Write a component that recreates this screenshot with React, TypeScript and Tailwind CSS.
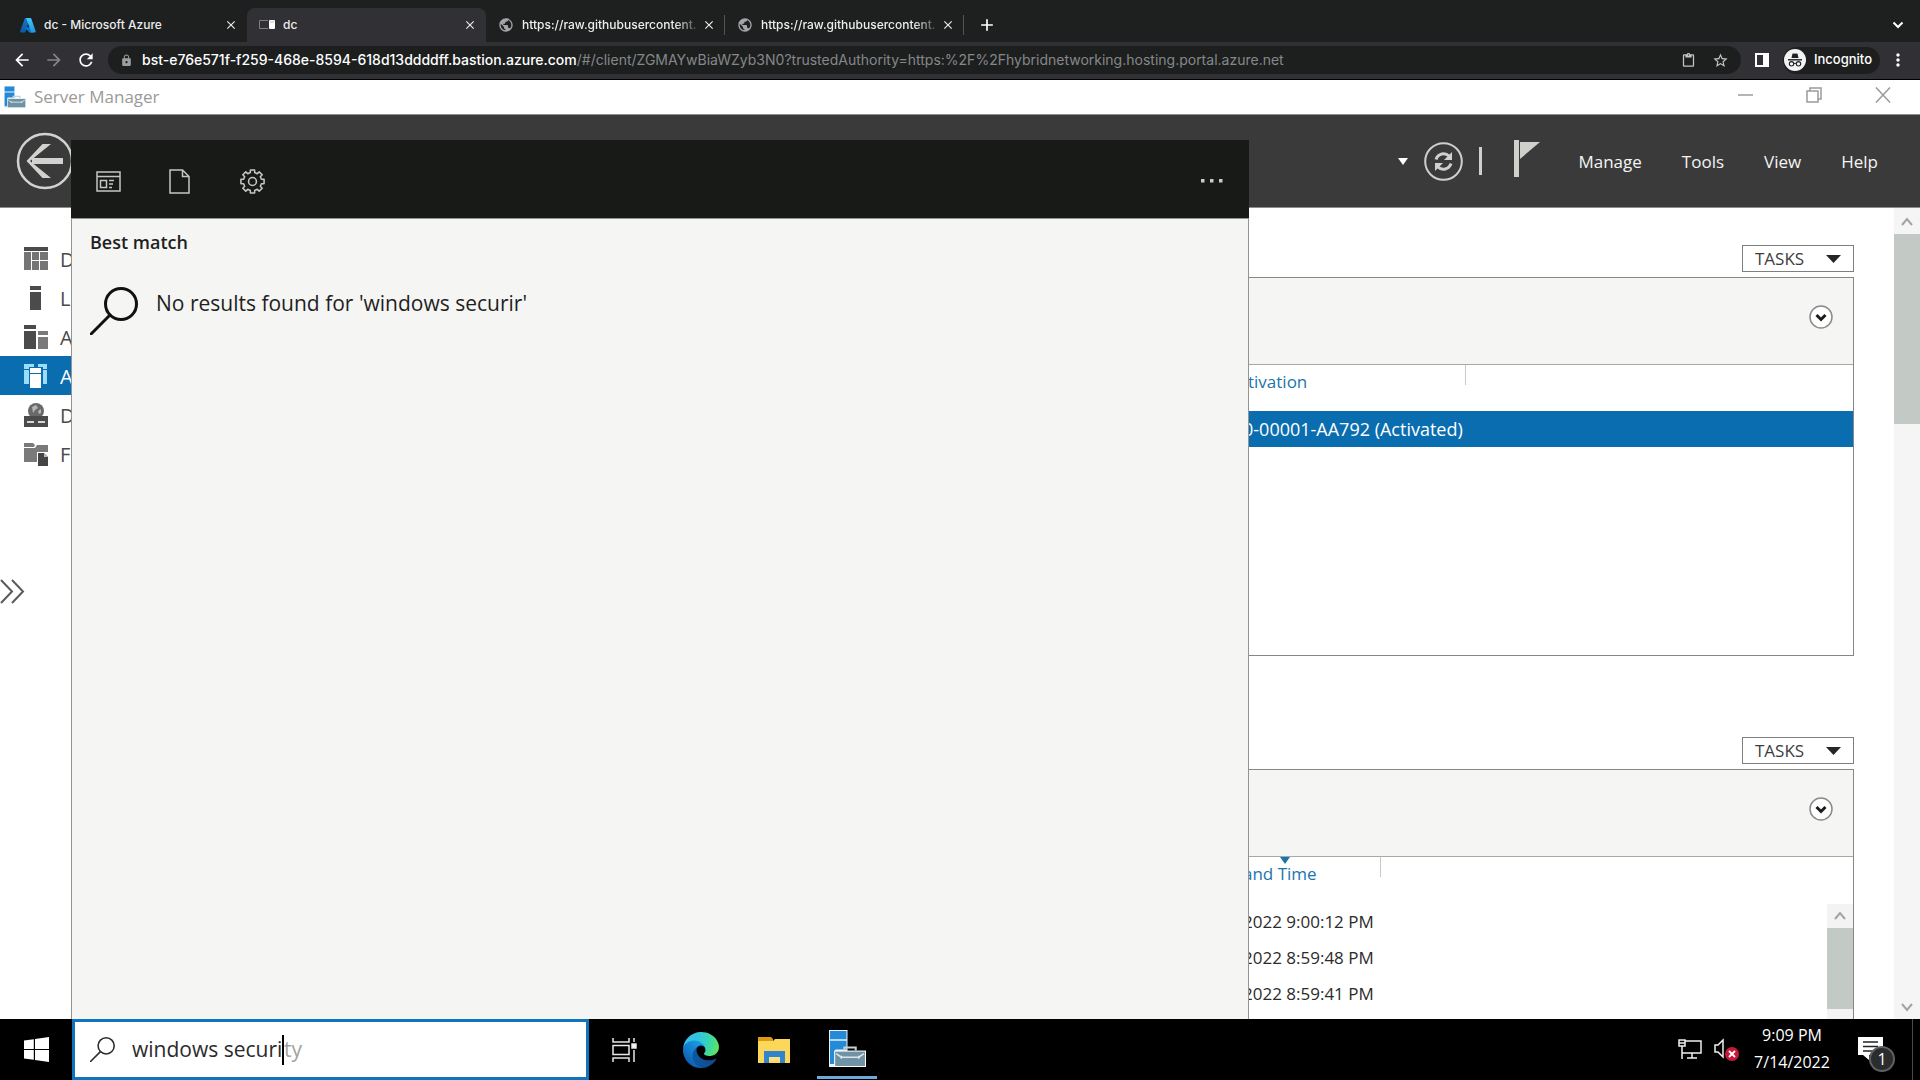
import React from "react";
import {
  MdArrowBack,
  MdArrowForward,
  MdRefresh,
  MdLock,
  MdStarBorder,
  MdContentPaste,
  MdMoreVert,
  MdPublic,
  MdClose,
  MdAdd,
} from "react-icons/md";

/* ---------- icons ---------- */

function AzureIcon() {
  return (
    <svg width="16" height="16" viewBox="0 0 96 96" aria-hidden="true">
      <defs>
        <linearGradient id="az1" x1="0" y1="0" x2="0" y2="1">
          <stop offset="0" stopColor="#1b74c4" />
          <stop offset="1" stopColor="#0a5aa8" />
        </linearGradient>
        <linearGradient id="az2" x1="0" y1="0" x2="0" y2="1">
          <stop offset="0" stopColor="#3ccbf4" />
          <stop offset="1" stopColor="#2892df" />
        </linearGradient>
      </defs>
      <path fill="url(#az1)" d="M33 6h28L32 90c-1 2-3 3-5 3H6c-4 0-6-4-5-7L28 10c1-2 3-4 5-4z" />
      <path fill="#0078d4" d="M72 62H30c-2 0-3 3-1 4l27 25c1 1 2 2 4 2h23z" />
      <path fill="url(#az2)" d="M68 10c-1-2-3-4-5-4H33c2 0 4 2 5 4l27 76c1 4-1 7-5 7h29c4 0 6-4 5-7z" />
    </svg>
  );
}

function BastionIcon() {
  return (
    <svg width="16" height="12" viewBox="0 0 16 12" aria-hidden="true">
      <path d="M0.500 1.500H9M0.500 1.500V9.500H9" stroke="#7c7e83" strokeWidth="1" fill="none" />
      <rect x="10" y="1" width="6" height="9" rx="1" fill="#fff" />
      <path d="M11 3h4" stroke="#b9bbc0" strokeWidth="1" />
    </svg>
  );
}

function ServerManagerIcon({ size }: { size: number }) {
  return (
    <svg width={size} height={size} viewBox="0 0 36 36" aria-hidden="true">
      <path d="M0 0h18v36H0z" fill="#e9f3fa" />
      <path d="M1 1h16v8H1zM1 10.500h16V19H6v14H1z" fill="#2489d6" />
      <path d="M5 20h31v16H5z" fill="#fff" />
      <path d="M6 21h29v14H6z" fill="#6f93a5" />
      <path d="M15 20v-3h11v3" fill="none" stroke="#c3d0d6" strokeWidth="2" />
      <path d="M7 23l5 3.500h17L34 23" fill="none" stroke="#dbe6eb" strokeWidth="1.500" />
      <path d="M12 25v3M29 25v3" stroke="#dbe6eb" strokeWidth="1.500" />
    </svg>
  );
}

function EdgeIcon() {
  return (
    <svg width="36" height="36" viewBox="0 0 256 256" aria-hidden="true">
      <defs>
        <linearGradient id="e1" x1="60" y1="180" x2="235" y2="180" gradientUnits="userSpaceOnUse">
          <stop offset="0" stopColor="#0c59a4" />
          <stop offset="1" stopColor="#114a8b" />
        </linearGradient>
        <linearGradient id="e2" x1="150" y1="90" x2="40" y2="220" gradientUnits="userSpaceOnUse">
          <stop offset="0" stopColor="#1b9de2" />
          <stop offset="0.5" stopColor="#1580d0" />
          <stop offset="1" stopColor="#0f5fb0" />
        </linearGradient>
        <radialGradient id="e3" cx="26" cy="45" r="250" gradientUnits="userSpaceOnUse">
          <stop offset="0" stopColor="#35c1f1" />
          <stop offset="0.350" stopColor="#30c5df" />
          <stop offset="0.650" stopColor="#38d6b0" />
          <stop offset="0.950" stopColor="#5fe65a" />
        </radialGradient>
      </defs>
      <path
        fill="url(#e1)"
        d="M231 190.500c-3.400 1.800-6.900 3.400-10.500 4.700-11.500 4.300-23.600 6.500-35.900 6.500-47.300 0-88.500-32.500-88.500-74.300.1-11.400 6.400-21.900 16.400-27.300-42.800 1.800-53.800 46.400-53.800 72.500 0 73.900 68.100 81.400 82.800 81.400 7.900 0 19.800-2.300 27-4.600l1.300-.4c27.600-9.500 51-28.100 66.600-52.800 1.200-1.900.6-4.300-1.200-5.500-1.300-.8-2.900-.9-4.200-.2z"
      />
      <path
        fill="url(#e2)"
        d="M105.700 241.400c-8.900-5.500-16.600-12.800-22.700-21.300-26.300-36-18.400-86.500 17.600-112.800 3.800-2.700 7.700-5.200 11.900-7.200 3.100-1.500 8.400-4.100 15.500-4 10.100.1 19.600 4.900 25.700 13 4 5.400 6.300 11.900 6.400 18.700 0-.2 24.500-79.600-80-79.600-43.900 0-80 41.700-80 78.200-.2 19.300 4 38.500 12.100 56 27.600 58.800 94.800 87.600 156.400 67.100-21.100 6.600-44.100 3.700-62.900-8.100z"
      />
      <path
        fill="url(#e3)"
        d="M152.300 148.900c-.9 1-3.400 2.500-3.400 5.600 0 2.600 1.700 5.200 4.800 7.300 14.300 10 41.400 8.600 41.500 8.600 10.700 0 21.100-2.900 30.300-8.300 18.800-11 30.400-31.100 30.400-52.900.3-22.400-8-37.300-11.300-43.900C223.500 23.900 177.700 0 128 0 58 0 1 56.200 0 126.200c.5-36.500 36.800-66 80-66 3.500 0 23.500.3 42 10.100 16.300 8.600 24.900 18.900 30.800 29.200 6.200 10.700 7.300 24.100 7.300 29.500 0 5.300-2.700 13.300-7.800 19.900z"
      />
    </svg>
  );
}

function FolderIcon() {
  return (
    <svg width="32" height="28" viewBox="0 0 32 28" aria-hidden="true">
      <path d="M0 1h13l2 2v4H0z" fill="#e09a12" />
      <path d="M0 5h15l2-2h15v24H0z" fill="#fbd75b" />
      <path d="M6 15h21v12h-5v-6H11v6H6z" fill="#3285cd" />
      <path d="M11 21h11v4H11z" fill="#fbe28a" />
    </svg>
  );
}

function TaskViewIcon() {
  return (
    <svg width="26" height="24" viewBox="0 0 26 24" fill="none" stroke="#e8e8e8" strokeWidth="1.500" aria-hidden="true">
      <path d="M1 0v4h16V0M1 24v-4h16v4M1 7.500h16v9H1z" />
      <path d="M22 0v4M22 12v12" />
      <rect x="20" y="6" width="4" height="4" fill="#fff" />
    </svg>
  );
}

function WindowsIcon() {
  return (
    <svg width="25" height="25" viewBox="0 0 25 25" fill="#fff" aria-hidden="true">
      <path d="M0 3.600L9.800 2.200v9.700H0zM11 2l14-2v11.900H11zM0 13.100h9.800v9.700L0 21.400zM11 13.100h14V25l-14-2z" />
    </svg>
  );
}

function SearchIcon({ size, stroke, color }: { size: number; stroke: number; color: string }) {
  return (
    <svg width={size} height={size} viewBox="0 0 48 48" fill="none" stroke={color} strokeWidth={stroke} aria-hidden="true">
      <circle cx="31" cy="17" r="15.500" />
      <path d="M20 28L1 47" strokeLinecap="round" />
    </svg>
  );
}

const gearPoints = Array.from({ length: 32 }, (_, i) => {
  const tooth = Math.floor(i / 4);
  const step = i % 4;
  const radius = step === 1 || step === 2 ? 11.3 : 8.8;
  const offset = [-0.24, -0.18, 0.18, 0.24][step];
  const angle = (tooth * Math.PI) / 4 + offset;
  return `${(12 + radius * Math.cos(angle)).toFixed(2)},${(12 + radius * Math.sin(angle)).toFixed(2)}`;
}).join(" ");

function GearIcon() {
  return (
    <svg width="25" height="25" viewBox="0 0 24 24" fill="none" stroke="#c4c6c3" strokeWidth="1.500" aria-hidden="true">
      <polygon points={gearPoints} strokeLinejoin="round" />
      <circle cx="12" cy="12" r="3.800" />
    </svg>
  );
}

function AppsIcon() {
  return (
    <svg width="25" height="21" viewBox="0 0 25 21" fill="none" stroke="#c4c6c3" strokeWidth="1.500" aria-hidden="true">
      <path d="M1 1h23v19H1zM1 5.500h23M4.500 9.500h6v7h-6zM13 9.500h5M13 13h4M13 16.500h3" />
    </svg>
  );
}

function DocIcon() {
  return (
    <svg width="21" height="25" viewBox="0 0 21 25" fill="none" stroke="#c4c6c3" strokeWidth="1.500" aria-hidden="true">
      <path d="M1 1h12.500L20 7.500V24H1zM13.500 1v6.500H20" />
    </svg>
  );
}

function DashboardIcon() {
  return (
    <>
      <path d="M0 0h24v4H0z" fill="#4b4b4b" />
      <path d="M0 5h7v18H0zM8 5h7v8H8zM16 5h8v8h-8zM8 14h7v9H8zM16 14h8v9h-8z" fill="#757575" />
    </>
  );
}
function LocalIcon() {
  return <path d="M6 0h11v4H6zM6 6h11v18H6z" fill="#4b4b4b" />;
}
function AllServersIcon() {
  return (
    <>
      <path d="M0 0h12v4H0zM0 6h12v18H0z" fill="#4b4b4b" />
      <path d="M14 6h10v4H14zM14 12h10v12H14z" fill="#7a7a7a" />
    </>
  );
}
function AdIcon() {
  return (
    <>
      <path d="M0 0h10v3H5v2H0zM14 0h9v5h-4V3h-5zM0 6h5v14H0zM19 6h4v14h-4z" fill="#9bdcf9" />
      <path d="M6 4h11v5H6zM6 10h11v14H6z" fill="#fff" />
    </>
  );
}
function DnsIcon() {
  return (
    <>
      <circle cx="12" cy="8" r="8" fill="#6a6a6a" />
      <path d="M8 4l4-2 2 3-3 2-2 3zM14 8l3-2v4l-2 1z" fill="#b5b5b5" />
      <path d="M0 13h24v11H0z" fill="#4b4b4b" />
      <path d="M3 19h7M14 19h7" stroke="#d5d5d5" strokeWidth="2" />
    </>
  );
}
function FileIcon() {
  return (
    <>
      <path d="M0 1h9l2 2-1 2H0zM0 6h11l2-3h11v7H13v10H0z" fill="#7a7a7a" />
      <path d="M14 11h6l4 4v9H14z" fill="#454545" />
      <path d="M20 11v4h4z" fill="#bcbcbc" />
    </>
  );
}

/* ---------- browser chrome ---------- */

type Tab = { title: string; icon: React.ReactNode; active?: boolean; divider?: boolean };

const tabs: Tab[] = [
  { title: "dc - Microsoft Azure", icon: <AzureIcon /> },
  { title: "dc", icon: <BastionIcon />, active: true },
  { title: "https://raw.githubusercontent.", icon: <MdPublic size={16} color="#a3a5a8" />, divider: true },
  { title: "https://raw.githubusercontent.", icon: <MdPublic size={16} color="#a3a5a8" />, divider: true },
];

function TabStrip() {
  return (
    <div className="flex h-[42px] shrink-0 items-end bg-[#1e2020] pl-2 pr-3 text-xs font-medium text-[#eceded]">
      {tabs.map((tab, i) => (
        <div
          key={i}
          className={
            tab.active
              ? "flex h-[34px] w-[239px] items-center rounded-t-lg bg-[#313035] pl-3"
              : "flex h-[34px] w-[239px] items-center pl-3"
          }
        >
          <span className="mr-2 flex w-4 shrink-0 justify-center">{tab.icon}</span>
          <span
            className={
              tab.divider
                ? "min-w-0 flex-1 whitespace-nowrap [mask-image:linear-gradient(to_right,black_85%,transparent)]"
                : "min-w-0 flex-1 whitespace-nowrap"
            }
          >
            {tab.title}
          </span>
          <button aria-label="Close tab" className="mr-2">
            <MdClose size={14} />
          </button>
          <span className={tab.divider ? "h-5 w-px bg-[#515355]" : "h-5 w-px"} />
        </div>
      ))}
      <button aria-label="New tab" className="ml-[13px] flex h-[34px] items-center">
        <MdAdd size={20} color="#fff" />
      </button>
      <button aria-label="Search tabs" className="ml-auto flex h-[34px] items-center px-1">
        <svg width="12" height="8" viewBox="0 0 12 8" fill="none" stroke="#fff" strokeWidth="2" aria-hidden="true">
          <path d="M1.500 1.500L6 6l4.500-4.500" />
        </svg>
      </button>
    </div>
  );
}

function Toolbar() {
  return (
    <div className="flex h-[38px] shrink-0 items-center border-b border-black bg-[#313035] pb-px pl-3 pr-3 text-white">
      <button aria-label="Back" className="w-8">
        <MdArrowBack size={20} />
      </button>
      <button aria-label="Forward" className="w-8 text-[#85868a]">
        <MdArrowForward size={20} />
      </button>
      <button aria-label="Reload" className="w-8">
        <MdRefresh size={20} />
      </button>
      <div className="flex h-7 min-w-0 flex-1 items-center rounded-full bg-[#1d1f1f] pl-3 pr-2">
        <MdLock size={13} color="#9c9ea1" />
        <a href="#address" className="ml-[9px] flex-1 overflow-hidden whitespace-nowrap text-sm text-[#85878a]">
          <span className="font-medium text-white">bst-e76e571f-f259-468e-8594-618d13ddddff.bastion.azure.com</span>
          /#/client/ZGMAYwBiaWZyb3N0?trustedAuthority=https:%2F%2Fhybridnetworking.hosting.portal.azure.net
        </a>
        <button aria-label="Clipboard" className="mr-4 text-[#c3c4c6]">
          <MdContentPaste size={15} />
        </button>
        <button aria-label="Bookmark this tab" className="mr-1 text-[#c3c4c6]">
          <MdStarBorder size={17} />
        </button>
      </div>
      <button aria-label="Side panel" className="ml-[14px]">
        <svg width="14" height="14" viewBox="0 0 14 14" aria-hidden="true">
          <path d="M0 0h14v14H0zM2 2v10h6V2z" fill="#fff" fillRule="evenodd" />
        </svg>
      </button>
      <button className="ml-[14px] flex h-[27px] items-center gap-2 rounded-full bg-[#1d1f1f] pl-px pr-2 text-[13px] font-medium">
        <svg width="22" height="22" viewBox="0 0 22 22" aria-hidden="true">
          <circle cx="11" cy="11" r="11" fill="#f3f3f4" />
          <path d="M7.500 9l1-4.200c.8-.5 1.500 0 2.500 0s1.700-.5 2.500 0l1 4.200z" fill="#202124" />
          <path d="M4 10.800h14" stroke="#202124" strokeWidth="1.400" />
          <g fill="none" stroke="#202124" strokeWidth="1.100">
            <circle cx="7.500" cy="14.800" r="2.200" />
            <circle cx="14.500" cy="14.800" r="2.200" />
            <path d="M9.700 14.600q1.300-.8 2.600 0" />
          </g>
        </svg>
        Incognito
      </button>
      <button aria-label="Menu" className="ml-2">
        <MdMoreVert size={20} />
      </button>
    </div>
  );
}

/* ---------- server manager ---------- */

function TitleBar() {
  return (
    <div className="flex h-[34px] shrink-0 items-center bg-white pl-1 text-[17px] text-[#9a9a97]">
      <ServerManagerIcon size={22} />
      <span className="ml-2">Server Manager</span>
      <div className="ml-auto flex items-center gap-[53px] pb-1 pr-[29px]">
        <button aria-label="Minimize">
          <svg width="15" height="16" viewBox="0 0 15 16" stroke="#9b9b9b" strokeWidth="1.500" aria-hidden="true">
            <path d="M0 8h15" />
          </svg>
        </button>
        <button aria-label="Restore">
          <svg width="16" height="16" viewBox="0 0 16 16" fill="none" stroke="#9b9b9b" strokeWidth="1.500" aria-hidden="true">
            <path d="M1 4h11v11H1zM4 4V1h11v11h-3" />
          </svg>
        </button>
        <button aria-label="Close">
          <svg width="16" height="16" viewBox="0 0 16 16" stroke="#9b9b9b" strokeWidth="1.500" aria-hidden="true">
            <path d="M1 0.500l14 15M15 0.500L1 15.500" />
          </svg>
        </button>
      </div>
    </div>
  );
}

function AppHeader() {
  return (
    <header className="flex h-[94px] shrink-0 items-center border-y border-[#8d8d8d] bg-[#3a3a3a] pl-4 pr-[42px] text-[17px] text-[#f4f4f4]">
      <button aria-label="Back">
        <svg width="58" height="58" viewBox="0 0 58 58" fill="none" stroke="#d2d3d1" aria-hidden="true">
          <circle cx="29" cy="29" r="27" strokeWidth="2.500" />
          <path d="M16 29h31" strokeWidth="6" />
          <path d="M35 12L14 29l21 17h-8.500L10.500 29 26.500 12z" fill="#d2d3d1" stroke="none" />
        </svg>
      </button>
      <div className="ml-auto flex items-center">
        <button aria-label="Breadcrumb menu">
          <svg width="10" height="7" viewBox="0 0 10 7" fill="#fff" aria-hidden="true">
            <path d="M0 0h10L5 7z" />
          </svg>
        </button>
        <button aria-label="Refresh" className="ml-4">
          <svg width="39" height="39" viewBox="0 0 39 39" fill="none" stroke="#cfcfcf" aria-hidden="true">
            <circle cx="19.500" cy="19.500" r="18.300" strokeWidth="2" />
            <path d="M12 17.500c2-6 9-7.500 13-3.500M27 21.500c-2 6-9 7.500-13 3.500" strokeWidth="3" />
            <path d="M28 10v8h-8zM11 29v-8h8z" fill="#cfcfcf" stroke="none" />
          </svg>
        </button>
        <span className="ml-4 h-7 w-[3px] bg-[#cfcfcf]" />
        <button aria-label="Notifications" className="mb-1.5 ml-8">
          <svg width="26" height="37" viewBox="0 0 26 37" fill="#cfcfcb" aria-hidden="true">
            <path d="M0 0h5v37H0zM6 2h20L6 19z" />
          </svg>
        </button>
        <nav className="ml-[38px] flex gap-10 pt-0.5">
          <button>Manage</button>
          <button>Tools</button>
          <button>View</button>
          <button>Help</button>
        </nav>
      </div>
    </header>
  );
}

const navItems = [
  { name: "Dashboard", shown: "D", icon: <DashboardIcon /> },
  { name: "Local Server", shown: "Lo", icon: <LocalIcon /> },
  { name: "All Servers", shown: "A", icon: <AllServersIcon /> },
  { name: "AD DS", shown: "A", icon: <AdIcon />, active: true },
  { name: "DNS", shown: "D", icon: <DnsIcon /> },
  { name: "File and Storage Services", shown: "F", icon: <FileIcon /> },
];

function Sidebar() {
  return (
    <nav className="flex w-[72px] shrink-0 flex-col overflow-hidden pt-[31px]">
      {navItems.map((item) => (
        <button
          key={item.name}
          aria-label={item.name}
          className={
            item.active
              ? "flex h-[39px] items-center gap-3 bg-[#0a6db0] pl-6 text-xl text-white"
              : "flex h-[39px] items-center gap-3 pl-6 text-xl text-[#4a4a4a]"
          }
        >
          <svg width="24" height="24" viewBox="0 0 24 24" className="shrink-0" aria-hidden="true">
            {item.icon}
          </svg>
          <span className="pt-0.5">{item.shown}</span>
        </button>
      ))}
      <button aria-label="Expand navigation" className="mt-[106px]">
        <svg width="25" height="25" viewBox="0 0 25 25" fill="none" stroke="#5a5a5a" strokeWidth="2" aria-hidden="true">
          <path d="M1 1l11 11.500L1 24M12 1l11 11.500L12 24" />
        </svg>
      </button>
    </nav>
  );
}

function Chevron({ up }: { up?: boolean }) {
  return (
    <svg width="12" height="10" viewBox="0 0 12 10" fill="none" stroke="#a2a4a2" strokeWidth="2" aria-hidden="true">
      <path d={up ? "M1 8l5-6 5 6" : "M1 2l5 6 5-6"} />
    </svg>
  );
}

function TasksButton() {
  return (
    <button className="flex h-[27px] w-28 shrink-0 items-center justify-between self-end border border-[#7f7f7f] bg-white px-3 text-[17px] leading-6 text-[#3d3d3d]">
      TASKS
      <svg width="15" height="8" viewBox="0 0 15 8" fill="#262626" aria-hidden="true">
        <path d="M0 0h15L7.500 8z" />
      </svg>
    </button>
  );
}

function PanelHeader() {
  return (
    <div className="flex h-[87px] shrink-0 items-center justify-end border-b border-[#a8a8a8] bg-[#f5f5f4] pb-2 pr-5">
      <button aria-label="Expand criteria">
        <svg width="24" height="24" viewBox="0 0 24 24" fill="none" aria-hidden="true">
          <circle cx="12" cy="12" r="11" fill="#fff" stroke="#8b8b8b" strokeWidth="1.500" />
          <path d="M7.500 10l4.500 4.500L16.500 10" stroke="#1c1c1c" strokeWidth="3" />
        </svg>
      </button>
    </div>
  );
}

function HeadCell({ children }: { children: React.ReactNode }) {
  return (
    <th className="p-0 align-top font-normal text-[#1c74ad]">
      <div className="flex items-start justify-between">
        {children}
        <span className="h-5 w-px bg-[#c9c9c9]" />
      </div>
    </th>
  );
}

const events = ["2022 9:00:12 PM", "2022 8:59:48 PM", "2022 8:59:41 PM"];

function Main() {
  return (
    <main className="flex min-w-0 flex-1 flex-col overflow-hidden pl-5 pr-10 pt-[37px]">
      <TasksButton />
      <section className="mt-[5px] h-[379px] shrink-0 border border-[#858686]">
        <PanelHeader />
        <table className="w-full table-fixed border-collapse text-left text-[17px]">
          <colgroup>
            <col className="w-[1150px]" />
            <col className="w-[223px]" />
            <col />
          </colgroup>
          <thead>
            <tr className="h-[46px]">
              <th />
              <HeadCell>
                <span className="pl-[5px] pt-1">tivation</span>
              </HeadCell>
              <th />
            </tr>
          </thead>
          <tbody>
            <tr className="h-9 bg-[#0a6db0] text-lg leading-6 text-white">
              <td />
              <td className="whitespace-nowrap p-0">0-00001-AA792 (Activated)</td>
              <td />
            </tr>
          </tbody>
        </table>
      </section>

      <div className="h-[81px] shrink-0" />
      <TasksButton />
      <section className="mt-[5px] flex min-h-0 flex-1 flex-col overflow-hidden border border-b-0 border-[#858686]">
        <PanelHeader />
        <div className="flex flex-1">
          <div className="min-w-0 flex-1">
            <table className="w-full table-fixed border-collapse text-left text-[17px]">
              <colgroup>
                <col className="w-[1150px]" />
                <col className="w-[138px]" />
                <col />
              </colgroup>
              <thead>
                <tr className="h-[47px]">
                  <th />
                  <HeadCell>
                    <span className="flex flex-col items-center">
                      <svg width="10" height="7" viewBox="0 0 10 7" fill="#1c74ad" className="ml-[10px]" aria-hidden="true">
                        <path d="M0 0h10L5 7z" />
                      </svg>
                      <span className="leading-5">and Time</span>
                    </span>
                  </HeadCell>
                  <th />
                </tr>
              </thead>
              <tbody className="text-[#2b2b2b]">
                {events.map((e) => (
                  <tr key={e} className="h-9">
                    <td />
                    <td className="whitespace-nowrap p-0">{e}</td>
                    <td />
                  </tr>
                ))}
              </tbody>
            </table>
          </div>
          <div className="mt-[47px] flex w-[26px] flex-col bg-[#f3f3f3]">
            <div className="flex h-6 items-center justify-center">
              <Chevron up />
            </div>
            <div className="mb-[10px] flex-1 bg-[#c3c9c4]" />
          </div>
        </div>
      </section>
    </main>
  );
}

function PageScrollbar() {
  return (
    <div className="flex w-[26px] shrink-0 flex-col items-stretch bg-[#f4f5f4]">
      <div className="flex h-[26px] items-center justify-center pt-0.5">
        <Chevron up />
      </div>
      <div className="h-[190px] bg-[#c3c9c4]" />
      <div className="mb-[7px] mt-auto flex justify-center">
        <Chevron />
      </div>
    </div>
  );
}

/* ---------- search flyout ---------- */

function SearchFlyout() {
  return (
    <div className="absolute bottom-0 left-[71px] top-[60px] flex w-[1178px] flex-col">
      <div className="flex h-[78px] shrink-0 items-center bg-[#171a16] pl-[25px] pr-[26px] pt-1">
        <button aria-label="Apps" className="flex w-[25px] justify-center">
          <AppsIcon />
        </button>
        <button aria-label="Documents" className="ml-[46px] flex w-[25px] justify-center">
          <DocIcon />
        </button>
        <button aria-label="Settings" className="ml-12 flex w-[25px] justify-center">
          <GearIcon />
        </button>
        <button aria-label="More options" className="ml-auto">
          <svg width="22" height="4" viewBox="0 0 22 4" fill="#c9cbc8" aria-hidden="true">
            <path d="M0 0h3.500v3.500H0zM9 0h3.500v3.500H9zM18 0h3.500v3.500H18z" />
          </svg>
        </button>
      </div>
      <div className="flex flex-1 flex-col border-x border-t border-[#929392] bg-[#f5f5f4] px-[18px] pt-[11px] text-[#1f1f1f]">
        <h2 className="text-lg font-semibold leading-6">Best match</h2>
        <div className="mt-[33px] flex">
          <SearchIcon size={48} stroke={3} color="#111" />
          <span className="ml-[18px] text-[21px] leading-8">No results found for 'windows securir'</span>
        </div>
      </div>
    </div>
  );
}

/* ---------- taskbar ---------- */

function Taskbar() {
  return (
    <footer className="flex h-[61px] shrink-0 items-center bg-black text-white">
      <button aria-label="Start" className="flex w-[72px] justify-center">
        <WindowsIcon />
      </button>
      <label className="flex h-full w-[517px] items-center border-[3px] border-[#1273bb] bg-white pl-[15px] text-[21px]">
        <SearchIcon size={25} stroke={3} color="#2b2b2b" />
        <input aria-label="Search" defaultValue="windows securi" className="ml-[17px] w-[150px] text-[#2b2b2b] outline-none" />
        <span className="h-[30px] w-[2px] bg-black" />
        <span className="text-[#a3a3a3]">ty</span>
      </label>
      <button aria-label="Task view" className="flex w-[72px] justify-center">
        <TaskViewIcon />
      </button>
      <button aria-label="Microsoft Edge" className="flex w-20 justify-center">
        <EdgeIcon />
      </button>
      <button aria-label="File Explorer" className="flex w-[66px] justify-center">
        <FolderIcon />
      </button>
      <button aria-label="Server Manager" className="ml-[10px] flex h-full w-[60px] flex-col items-center justify-end pb-px">
        <ServerManagerIcon size={37} />
        <span className="mt-[9px] h-[3px] w-full bg-[#6fa9dc]" />
      </button>
      <div className="ml-auto flex h-full items-center">
        <button aria-label="Network">
          <svg width="24" height="21" viewBox="0 0 24 21" fill="none" stroke="#f0f0f0" strokeWidth="1.500" aria-hidden="true">
            <path d="M7 2h16v12H4M1 1h6v6H1zM4 7v13M1 4h6M9 19h10M14 14v5" />
          </svg>
        </button>
        <button aria-label="Volume muted" className="ml-3">
          <svg width="26" height="24" viewBox="0 0 26 24" fill="none" aria-hidden="true">
            <path d="M1 7h3l5-5v17l-5-5H1z" stroke="#f0f0f0" strokeWidth="1.500" />
            <circle cx="18" cy="16" r="7" fill="#c8183a" />
            <path d="M15 13l6 6M21 13l-6 6" stroke="#fff" strokeWidth="1.800" />
          </svg>
        </button>
        <button className="ml-[11px] flex w-[82px] flex-col items-center pb-0.5 text-base leading-[27px]">
          <span>9:09 PM</span>
          <span>7/14/2022</span>
        </button>
        <button aria-label="1 new notification" className="relative ml-[25px] h-[25px] w-[25px]">
          <svg width="25" height="25" viewBox="0 0 25 25" aria-hidden="true">
            <path d="M0 0h25v18H11l0 5-6-5H0z" fill="#fff" />
            <path d="M5 5h15M5 9.500h15M5 14h10" stroke="#222" strokeWidth="1.500" />
          </svg>
          <span className="absolute left-[11px] top-[9px] flex size-[26px] items-center justify-center rounded-full border-2 border-[#5e6062] bg-[#2a2c2d] text-base">
            1
          </span>
        </button>
        <span className="ml-[29px] mr-[7px] h-full w-px bg-[#4a4a4a]" />
      </div>
    </footer>
  );
}

export default function App() {
  return (
    <div className="flex h-screen min-h-0 flex-col overflow-hidden bg-white font-['Open_Sans',sans-serif]">
      <div className="shrink-0 font-['Inter',sans-serif]">
        <TabStrip />
        <Toolbar />
      </div>
      <div className="relative flex min-h-0 flex-1 flex-col">
        <TitleBar />
        <AppHeader />
        <div className="flex min-h-0 flex-1">
          <Sidebar />
          <Main />
          <PageScrollbar />
        </div>
        <SearchFlyout />
      </div>
      <Taskbar />
    </div>
  );
}
